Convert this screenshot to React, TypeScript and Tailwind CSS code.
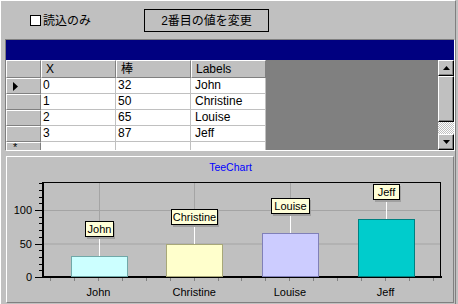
import React from "react";

const rows = [
    {x: 0, v: 32, label: "John"},
    {x: 1, v: 50, label: "Christine"},
    {x: 2, v: 65, label: "Louise"},
    {x: 3, v: 87, label: "Jeff"},
];

const bars = [
    {label: "John", v: 32, fill: "#ccffff", stroke: "#70a8a8", w: 28},
    {label: "Christine", v: 50, fill: "#ffffcc", stroke: "#a8a878", w: 46},
    {label: "Louise", v: 65, fill: "#ccccff", stroke: "#8080b8", w: 38},
    {label: "Jeff", v: 87, fill: "#00cccc", stroke: "#008080", w: 26},
];

// chart scale: 0 at y=277, 100 at y=210
const yOf = (v: number) => 277 - v * 0.67;

function HeaderCell({children}: { children?: React.ReactNode }) {
    return (
        <div className="w-[75px] h-[18px] bg-[#c0c0c0] border-t border-l border-white border-r border-b border-r-[#808080] border-b-[#808080] pl-[4px] text-[12px] leading-[16px] text-black">
            {children}
        </div>
    );
}

function Cell({children}: { children?: React.ReactNode }) {
    return (
        <div className="w-[75px] h-full bg-white border-r border-b border-[#c0c0c0] pl-[2px] text-[12px] leading-[15px] text-black whitespace-nowrap overflow-hidden">
            {children}
        </div>
    );
}

function Indicator({children}: { children?: React.ReactNode }) {
    return (
        <div className="w-[35px] h-full bg-[#c0c0c0] border-t border-l border-white border-r border-b border-r-[#808080] border-b-[#808080] flex items-center pl-[6px]">
            {children}
        </div>
    );
}

function ScrollButton({up}: { up?: boolean }) {
    return (
        <div className="w-[16px] h-[16px] bg-[#c0c0c0] border-t border-l border-white border-r border-b border-r-black border-b-black shadow-[inset_-1px_-1px_#808080] flex items-center justify-center">
            <svg width="7" height="4" viewBox="0 0 7 4">
                {up ? <polygon points="3.5,0 7,4 0,4" fill="#000"/> : <polygon points="0,0 7,0 3.5,4" fill="#000"/>}
            </svg>
        </div>
    );
}

function Grid() {
    return (
        <div className="ml-[4px] w-[450px] border-t border-l border-[#808080] border-b border-r border-b-white border-r-white">
            <div className="h-[20px] bg-[#000080]"/>
            <div className="flex h-[90px]">
                <div className="w-[260px] flex flex-col overflow-hidden">
                    <div className="flex h-[18px]">
                        <div className="w-[35px] h-[18px] bg-[#c0c0c0] border-t border-l border-white border-r border-b border-r-[#808080] border-b-[#808080]"/>
                        <HeaderCell>X</HeaderCell>
                        <HeaderCell>棒</HeaderCell>
                        <HeaderCell>Labels</HeaderCell>
                    </div>
                    {rows.map((r, i) => (
                        <div key={i} className="flex h-[16px] shrink-0">
                            <Indicator>
                                {i === 0 && (
                                    <svg width="5" height="9" viewBox="0 0 5 9">
                                        <polygon points="0,0 5,4.5 0,9" fill="#000"/>
                                    </svg>
                                )}
                            </Indicator>
                            <Cell>{r.x}</Cell>
                            <Cell>{r.v}</Cell>
                            <Cell><span className="pl-[2px]">{r.label}</span></Cell>
                        </div>
                    ))}
                    <div className="flex h-[8px] shrink-0 overflow-hidden">
                        <div className="w-[35px] h-full bg-[#c0c0c0] border-t border-l border-white border-r border-r-[#808080] pl-[6px] pt-[1px]">
                            <div className="text-[11px] leading-[6px] h-[6px] text-black">*</div>
                        </div>
                        <div className="w-[75px] h-full bg-white border-r border-[#c0c0c0]"/>
                        <div className="w-[75px] h-full bg-white border-r border-[#c0c0c0]"/>
                        <div className="w-[75px] h-full bg-white border-r border-[#c0c0c0]"/>
                    </div>
                </div>
                <div className="flex-1 bg-[#808080]"/>
                <div className="w-[16px] flex flex-col">
                    <ScrollButton up/>
                    <div className="w-[16px] h-[46px] bg-[#c0c0c0] border-t border-l border-white border-r border-b border-r-black border-b-black shadow-[inset_-1px_-1px_#808080]"/>
                    <div className="w-[16px] h-[12px] bg-[repeating-conic-gradient(#ffffff_0_25%,#c0c0c0_0_50%)] bg-[length:2px_2px]"/>
                    <ScrollButton/>
                </div>
            </div>
        </div>
    );
}

function Chart() {
    const ticksX = Array.from({length: 17}, (_, k) => 50 + k * 23.93);
    const ticksY = Array.from({length: 15}, (_, k) => k * 10);
    return (
        <div className="mt-[5px] ml-[5px] w-[448px] h-[147px] border-t border-l border-white border-r border-b border-r-[#808080] border-b-[#808080]">
            <svg width="446" height="145" viewBox="7 157 446 145" className="block font-['Liberation_Sans',sans-serif]">
                <text x="230.5" y="171" fontSize="10.5" fill="#0000ff" textAnchor="middle">TeeChart</text>

                {/* grid */}
                {[100, 50].map((v) => (
                    <line key={v} x1="43" x2="441" y1={yOf(v) + 0.5} y2={yOf(v) + 0.5} stroke="#a4a4a4"/>
                ))}
                {bars.map((b, i) => {
                    const cx = 98.5 + i * 95.7;
                    return <line key={b.label} x1={Math.round(cx) + 0.5} x2={Math.round(cx) + 0.5} y1="183" y2="276" stroke="#a4a4a4"/>;
                })}

                {/* frame + axes */}
                <rect x="42.5" y="182.5" width="398" height="94" fill="none" stroke="#000"/>
                <line x1="43" x2="43" y1="182" y2="278" stroke="#000" strokeWidth="2"/>
                <line x1="42" x2="442" y1="277" y2="277" stroke="#000" strokeWidth="2"/>

                {ticksY.map((v) => (
                    <line key={v} x1={v % 50 === 0 ? 35 : 39} x2="42" y1={Math.round(yOf(v)) + 0.5} y2={Math.round(yOf(v)) + 0.5} stroke="#000"/>
                ))}
                {ticksX.map((x, k) => (
                    <line key={k} x1={Math.round(x) + 0.5} x2={Math.round(x) + 0.5} y1="278" y2="281" stroke="#808080"/>
                ))}
                {[100, 50, 0].map((v) => (
                    <text key={v} x="32" y={yOf(v) + 4} fontSize="11" fill="#000" textAnchor="end">{v}</text>
                ))}

                {/* bars, marks */}
                {bars.map((b, i) => {
                    const cx = 98.5 + i * 95.7;
                    const top = Math.round(yOf(b.v));
                    const boxBottom = top - 19;
                    const bx = Math.round(cx - b.w / 2);
                    return (
                        <g key={b.label}>
                            <rect x={Math.round(cx - 28) + 0.5} y={top + 0.5} width="56" height={276 - top} fill={b.fill} stroke={b.stroke}/>
                            <line x1={Math.round(cx) + 0.5} x2={Math.round(cx) + 0.5} y1={boxBottom} y2={top} stroke="#fff"/>
                            <rect x={bx + 2} y={boxBottom - 14} width={b.w} height="16" fill="#a0a0a0"/>
                            <rect x={bx + 0.5} y={boxBottom - 15.5} width={b.w} height="15" fill="#ffffd8" stroke="#000"/>
                            <text x={bx + b.w / 2 + 0.5} y={boxBottom - 4} fontSize="11" fill="#000" textAnchor="middle">{b.label}</text>
                            <text x={cx} y="296" fontSize="11" fill="#000" textAnchor="middle">{b.label}</text>
                        </g>
                    );
                })}
            </svg>
        </div>
    );
}

export default function App() {
    return (
        <div className="w-[458px] h-[304px] bg-[#c0c0c0] overflow-hidden font-['Liberation_Sans','Noto_Sans_CJK_JP',sans-serif]">
            <div className="w-[456px] h-[304px] border-t border-l border-white border-r border-r-[#808080]">
                <div className="h-[38px] flex items-center pt-[1px] pl-[29px]">
                    <label className="w-[114px] flex items-center gap-[2px] text-[12px] text-black">
                        <span className="w-[11px] h-[11px] bg-white border border-black"/>
                        <span>読込のみ</span>
                    </label>
                    <button className="w-[125px] h-[23px] bg-[#c0c0c0] border border-black text-[12px] text-black leading-none">
                        2番目の値を変更
                    </button>
                </div>
                <Grid/>
                <Chart/>
            </div>
        </div>
    );
}
